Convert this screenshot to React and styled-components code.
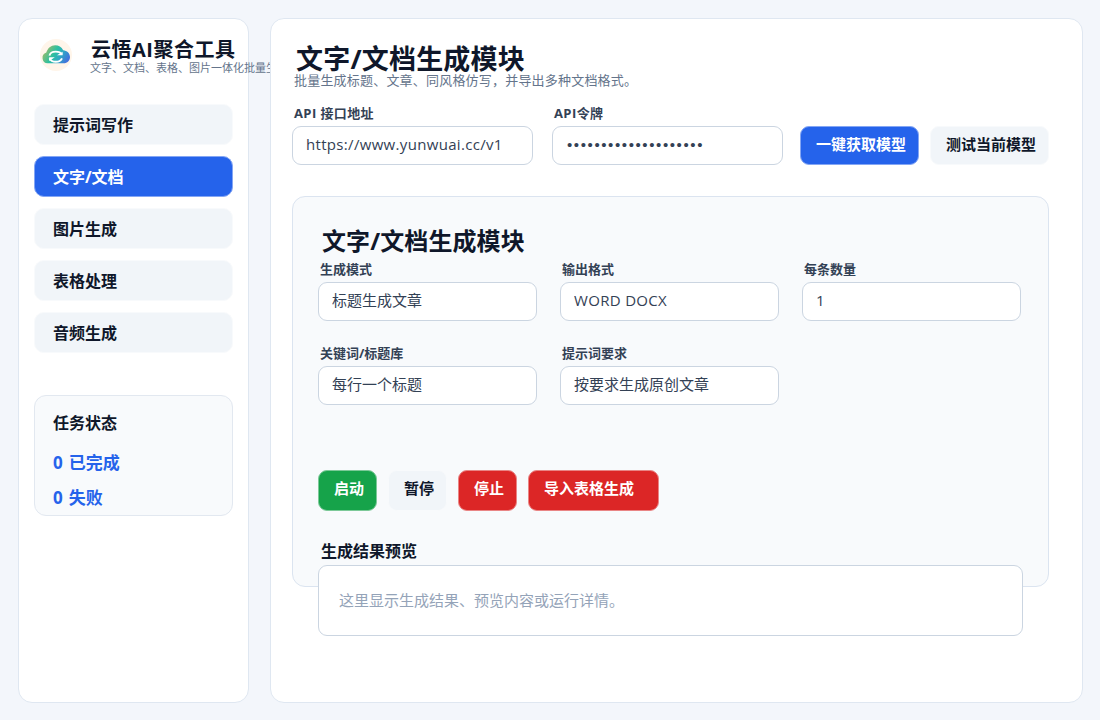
import { useState } from "react";
import styled, { createGlobalStyle, css } from "styled-components";

const navItems = ["提示词写作", "文字/文档", "图片生成", "表格处理", "音频生成"];

const fields = [
  { label: "生成模式", value: "标题生成文章" },
  { label: "输出格式", value: "WORD DOCX", latin: true },
  { label: "每条数量", value: "1", latin: true },
  { label: "关键词/标题库", value: "每行一个标题" },
  { label: "提示词要求", value: "按要求生成原创文章" },
];

function Logo() {
  return (
    <LogoSvg viewBox="0 0 32 32">
      <defs>
        <linearGradient id="cloud" x1="0" y1="0.2" x2="1" y2="0.6">
          <stop offset="0" stopColor="#b5b95c" />
          <stop offset="0.45" stopColor="#2dc0a0" />
          <stop offset="0.7" stopColor="#2fa9c4" />
          <stop offset="1" stopColor="#4273dc" />
        </linearGradient>
      </defs>
      <circle cx="16" cy="16" r="16" fill="#fff5ea" />
      <path
        d="M7.5 24.3A5.5 5.5 0 0 1 6.3 13.6C7.6 9.2 11 6.2 15.2 6.2c3.5 0 6.3 1.8 8 5 3.7.3 6.8 3 6.8 6.8 0 3.7-2.7 6.3-6.3 6.3z"
        fill="url(#cloud)"
      />
      <path
        d="M22 15.5c-1.2-2-3.4-2.900-6.200-2.900-3.300 0-5.800 1.400-6.300 4M9.500 19.300c1.200 2.400 3.500 3.500 6.300 3.500 2.900 0 5.100-1.100 6.200-3.500"
        fill="none"
        stroke="#fff"
        strokeWidth="1.9"
      />
      <path d="M17 16.3h5.600v-3.600zM14.800 18.300H9.200v3.600z" fill="#fff" />
    </LogoSvg>
  );
}

function Field({ label, value, latin }) {
  return (
    <FieldBox>
      <Label>{label}</Label>
      <Input defaultValue={value} $latin={latin} />
    </FieldBox>
  );
}

function App() {
  const [active, setActive] = useState("文字/文档");

  return (
    <Layout>
      <GlobalStyle />
      <Sidebar>
        <Brand>
          <Logo />
          <div>
            <BrandName>云悟AI聚合工具</BrandName>
            <BrandDesc>文字、文档、表格、图片一体化批量生成</BrandDesc>
          </div>
        </Brand>
        <Nav>
          {navItems.map((name) => (
            <NavItem key={name} $active={name === active} onClick={() => setActive(name)}>
              {name}
            </NavItem>
          ))}
        </Nav>
        <Status>
          <StatusTitle>任务状态</StatusTitle>
          <StatusCount>0 已完成</StatusCount>
          <StatusCount>0 失败</StatusCount>
        </Status>
      </Sidebar>

      <Main>
        <PageTitle>文字/文档生成模块</PageTitle>
        <PageDesc>批量生成标题、文章、同风格仿写，并导出多种文档格式。</PageDesc>
        <ApiRow>
          <FieldBox $width={241}>
            <Label $latin>API 接口地址</Label>
            <Input $latin defaultValue="https://www.yunwuai.cc/v1" />
          </FieldBox>
          <FieldBox $width={231}>
            <Label $latin>API令牌</Label>
            <TokenInput defaultValue={"•".repeat(20)} />
          </FieldBox>
          <ApiButtons>
            <Button $kind="primary" $width={119} $height={39}>一键获取模型</Button>
            <Button $width={119} $height={39}>测试当前模型</Button>
          </ApiButtons>
        </ApiRow>

        <Panel>
          <PanelTitle>文字/文档生成模块</PanelTitle>
          <FieldGrid>
            {fields.map((field) => (
              <Field key={field.label} {...field} />
            ))}
          </FieldGrid>
          <Actions>
            <Button $kind="success" $width={59}>启动</Button>
            <Button $width={59}>暂停</Button>
            <Button $kind="danger" $width={59}>停止</Button>
            <Button $kind="danger" $width={131}>导入表格生成</Button>
          </Actions>
          <PreviewTitle>生成结果预览</PreviewTitle>
          <Preview>这里显示生成结果、预览内容或运行详情。</Preview>
        </Panel>
      </Main>
    </Layout>
  );
}

export default App;

const GlobalStyle = createGlobalStyle`
  * {
    box-sizing: border-box;
  }
  body {
    margin: 0;
    background: #f3f6fb;
    color: #0f172a;
    font-family: "Open Sans", "Noto Sans CJK SC", sans-serif;
  }
  button, input {
    font-family: inherit;
  }
`

const Layout = styled.div`
  display: flex;
  gap: 21px;
  width: 1100px;
  height: 720px;
  padding: 18px 17px 17px 18px;
  overflow: hidden;
`

const card = css`
  background: #fff;
  border: 1px solid #dfe7f1;
  border-radius: 14px;
`

const Sidebar = styled.aside`
  ${card}
  flex: none;
  width: 231px;
  padding: 0 15px;
`

const Brand = styled.div`
  display: flex;
  height: 85px;
  padding: 20px 0 0 6px;
  white-space: nowrap;
`

const LogoSvg = styled.svg`
  flex: none;
  width: 32px;
  height: 32px;
  margin-right: 18px;
`

const BrandName = styled.div`
  height: 21px;
  padding-left: 1px;
  font-size: 20px;
  font-weight: 700;
  letter-spacing: 0.5px;
  line-height: 21px;
`

const BrandDesc = styled.div`
  font-size: 11px;
  line-height: 16px;
  color: #64748b;
`

const Nav = styled.nav`
  display: flex;
  flex-direction: column;
  gap: 11px;
`

const NavItem = styled.button`
  height: 41px;
  padding: 2px 18px 0;
  border: 1px solid ${props => props.$active ? "#84a6f4" : "#f8fafc"};
  border-radius: 10px;
  background: ${props => props.$active ? "#2563eb" : "#f1f5f9"};
  color: ${props => props.$active ? "#fff" : "#0f172a"};
  font-size: 16px;
  font-weight: 700;
  line-height: 37px;
  text-align: left;
`

const Status = styled.section`
  height: 121px;
  margin-top: 42px;
  padding: 15px 18px;
  border: 1px solid #e2e8f0;
  border-radius: 12px;
  background: #f8fafc;
`

const StatusTitle = styled.div`
  margin-bottom: 10px;
  font-size: 16px;
  font-weight: 700;
  line-height: 24px;
`

const StatusCount = styled.div`
  height: 35px;
  color: #2563eb;
  font-size: 17px;
  font-weight: 700;
  line-height: 36px;
  word-spacing: 1.5px;
`

const Main = styled.main`
  ${card}
  position: relative;
  flex: 1;
  padding: 22px 21px 0;
`

const PageTitle = styled.h1`
  height: 31px;
  margin: 0;
  padding-left: 4px;
  font-size: 27px;
  font-weight: 700;
  letter-spacing: 0.2px;
  line-height: 36px;
`

const PageDesc = styled.p`
  margin: 0;
  padding-left: 2px;
  color: #64748b;
  font-size: 13px;
  letter-spacing: 0.2px;
  line-height: 16px;
`

const ApiRow = styled.div`
  display: flex;
  align-items: flex-end;
  gap: 19px;
  margin-top: 16px;
`

const FieldBox = styled.label`
  display: flex;
  flex-direction: column;
  width: ${props => props.$width ? `${props.$width}px` : "auto"};
`

const Label = styled.span`
  padding-left: 2px;
  height: 22px;
  color: #334155;
  font-size: 13px;
  font-weight: 700;
  letter-spacing: ${props => props.$latin ? "0.4px" : "0"};
  line-height: 18px;
`

const Input = styled.input`
  width: 100%;
  height: 39px;
  padding: 0 13px ${props => props.$latin ? 3 : 5}px;
  border: 1px solid #cbd5e1;
  border-radius: 9px;
  background: #fff;
  color: #334155;
  font-size: 15px;
  letter-spacing: ${props => props.$latin ? "0.32px" : "0"};
  outline: none;
`

const TokenInput = styled(Input)`
  padding: 0 14px 3px;
  font-family: "Liberation Sans", sans-serif;
  letter-spacing: 1.6px;
`

const ApiButtons = styled.div`
  display: flex;
  gap: 11px;
  margin-left: -2px;
`

const kinds = {
  primary: { bg: "#2563eb", edge: "#84a6f4", color: "#fff" },
  success: { bg: "#16a34a", edge: "#7cc998", color: "#fff" },
  danger: { bg: "#dc2626", edge: "#e98585", color: "#fff" },
  plain: { bg: "#f1f5f9", edge: "#f8fafc", color: "#0f172a" },
}

const Button = styled.button`
  flex: none;
  width: ${props => props.$width}px;
  height: ${props => props.$height || 41}px;
  padding: 0 0 ${props => props.$height ? 4 : 6}px 15px;
  border: 1px solid ${props => kinds[props.$kind || "plain"].edge};
  border-radius: 9px;
  background: ${props => kinds[props.$kind || "plain"].bg};
  color: ${props => kinds[props.$kind || "plain"].color};
  font-size: 15px;
  font-weight: 700;
  text-align: left;
  white-space: nowrap;
`

const Panel = styled.section`
  width: 757px;
  height: 391px;
  margin-top: 31px;
  padding: 28px 25px 0;
  border: 1px solid #dbe4f0;
  border-radius: 13px;
  background: #f8fafc;
`

const PanelTitle = styled.h2`
  height: 35px;
  margin: 0;
  padding-left: 4px;
  font-size: 24px;
  font-weight: 700;
  letter-spacing: 0.1px;
  line-height: 32px;
`

const FieldGrid = styled.div`
  display: grid;
  grid-template-columns: repeat(3, 219px);
  gap: 23px;
`

const Actions = styled.div`
  display: flex;
  gap: 11px;
  margin-top: 65px;
`

const PreviewTitle = styled.h3`
  height: 24px;
  margin: 30px 0 0;
  padding-left: 3px;
  font-size: 16px;
  font-weight: 700;
  line-height: 20px;
`

const Preview = styled.div`
  width: 705px;
  height: 71px;
  padding: 0 20px;
  border: 1px solid #cbd5e1;
  border-radius: 9px;
  background: #fff;
  color: #94a3b8;
  font-size: 15px;
  line-height: 69px;
`
